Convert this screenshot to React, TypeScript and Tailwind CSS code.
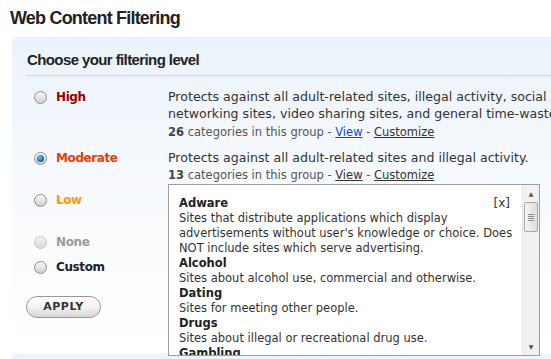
import React from "react";

function Radio({ checked = false, faded = false }: { checked?: boolean; faded?: boolean }) {
  return (
    <span
      className={
        "relative inline-flex h-[13px] w-[13px] shrink-0 items-center justify-center rounded-full border bg-gradient-to-b " +
        (faded
          ? "border-[#c4c4c4] from-[#f4f4f4] to-[#d8d8d8]"
          : "border-[#8f8f8f] from-[#fafafa] to-[#cfcfcf]")
      }
    >
      {checked && (
        <span className="h-[7px] w-[7px] rounded-full bg-[radial-gradient(circle_at_40%_35%,#6fc4f0,#0f5f9c_70%,#0b3f6b)]" />
      )}
    </span>
  );
}

function Cat({ n, blueView }: { n: number; blueView?: boolean }) {
  return (
    <div className={"text-[11.5px] leading-[18px] text-[#555] " + (blueView ? "pt-[1px]" : "")}>
      <b className="text-[#444]">{n}</b> categories in this group -{" "}
      <span className={"underline " + (blueView ? "text-[#0b4fb5]" : "text-[#333]")}>View</span> -{" "}
      <span className="underline text-[#333]">Customize</span>
    </div>
  );
}

const items: [string, React.ReactNode][] = [
  [
    "Adware",
    <>
      Sites that distribute applications which display
      <br />
      advertisements without user's knowledge or choice. Does
      <br />
      NOT include sites which serve advertising.
    </>,
  ],
  ["Alcohol", "Sites about alcohol use, commercial and otherwise."],
  ["Dating", "Sites for meeting other people."],
  ["Drugs", "Sites about illegal or recreational drug use."],
  ["Gambling", "Sites about gambling, online and otherwise."],
];

const label = "text-[12px] font-bold leading-[17px] tracking-[-0.4px]";

export default function App() {
  return (
    <div className="relative h-[359px] w-[551px] overflow-hidden bg-white font-['DejaVu_Sans',sans-serif] text-[#333]">
      <h1 className="pl-[10px] pt-[7px] font-['Liberation_Sans',Arial,sans-serif] text-[18px] font-bold leading-[22px] tracking-[-0.8px] text-[#222]">
        Web Content Filtering
      </h1>
      <div className="ml-[12px] mt-[8px] rounded-tl-[5px] bg-gradient-to-b from-[#ebf2fa] via-[#f6f9fd] via-40% to-white">
        <div className="ml-[15px] border-b border-[#d2d5d9] pb-[6px] pt-[14px] font-['Liberation_Sans',Arial,sans-serif] text-[15px] font-bold leading-[18px] tracking-[-0.6px] text-[#222]">
          Choose your filtering level
        </div>

        {/* High */}
        <div className="mt-[12px] flex">
          <div className="flex w-[156px] shrink-0 items-center gap-[9px] self-start pl-[22px] pt-[1px]">
            <Radio />
            <span className={label + " text-[#990000]"}>High</span>
          </div>
          <div className="whitespace-nowrap">
            <div className="text-[12.6px] leading-[17px] text-[#333]">
              Protects against all adult-related sites, illegal activity, social
              <br />
              networking sites, video sharing sites, and general time-wasters.
            </div>
            <Cat n={26} blueView />
          </div>
        </div>

        {/* Moderate */}
        <div className="mt-[8px] flex">
          <div className="flex w-[156px] shrink-0 items-center gap-[9px] self-start pl-[22px] pt-[1px]">
            <Radio checked />
            <span className={label + " text-[#e0400d]"}>Moderate</span>
          </div>
          <div className="whitespace-nowrap">
            <div className="text-[12.6px] leading-[17px] text-[#333]">
              Protects against all adult-related sites and illegal activity.
            </div>
            <Cat n={13} />
          </div>
        </div>

        {/* Low / None / Custom + box */}
        <div className="flex">
          <div className="flex w-[156px] shrink-0 flex-col pl-[22px]">
            <div className="mt-[8px] flex items-center gap-[9px]">
              <Radio />
              <span className={label + " text-[#ff9900]"}>Low</span>
            </div>
            <div className="mt-[25px] flex items-center gap-[9px]">
              <Radio faded />
              <span className={label + " text-[#9a9a9a]"}>None</span>
            </div>
            <div className="mt-[8px] flex items-center gap-[9px]">
              <Radio />
              <span className={label + " text-[#222]"}>Custom</span>
            </div>
            <button className="-ml-[8px] mt-[20px] h-[22px] w-[75px] rounded-full border border-[#9a9a9a] bg-gradient-to-b from-white via-[#f3f3f3] to-[#d6d6d6] text-[11px] font-bold tracking-[0.5px] text-[#333] shadow-[inset_0_1px_0_#fff]">
              APPLY
            </button>
          </div>
          <div className="relative z-10 -mb-[3px] flex h-[172px] w-[372px] border border-[#9d9d9d] bg-white">
            <div className="flex-1 overflow-hidden whitespace-nowrap px-[10px] pt-[11px] text-[11.5px] leading-[15px] text-[#333]">
              {items.map(([t, d], i) => (
                <div key={t}>
                  <div className="flex justify-between">
                    <b className="text-[#222]">{t}</b>
                    {i === 0 && <span className="pr-[2px] text-[12px] text-[#333]">[x]</span>}
                  </div>
                  <div>{d}</div>
                </div>
              ))}
            </div>
            <div className="flex w-[17px] flex-col border-l border-[#e6e6e6] bg-[#f1f1f1]">
              <div className="flex h-[17px] items-center justify-center text-[6px] text-[#555]">▲</div>
              <div className="mx-[1px] flex h-[30px] items-center justify-center rounded-[2px] border border-[#a8a8a8] bg-gradient-to-r from-[#f6f6f6] to-[#dcdcdc]">
                <div className="flex flex-col gap-[1px]">
                  <span className="block h-px w-[6px] bg-[#8a8a8a]" />
                  <span className="block h-px w-[6px] bg-[#8a8a8a]" />
                  <span className="block h-px w-[6px] bg-[#8a8a8a]" />
                  <span className="block h-px w-[6px] bg-[#8a8a8a]" />
                </div>
              </div>
              <div className="flex-1" />
              <div className="flex h-[17px] items-center justify-center text-[6px] text-[#555]">▼</div>
            </div>
          </div>
        </div>
      </div>
      <div className="ml-[12px] h-[20px] rounded-tl-[5px] bg-[#edf4fb]" />
    </div>
  );
}
